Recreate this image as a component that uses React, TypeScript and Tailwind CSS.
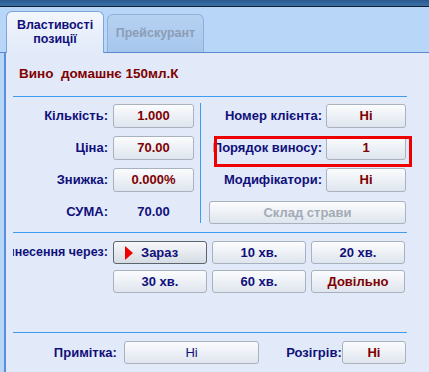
const btn =
  "flex items-center justify-center rounded-[3px] border border-[#a9b1bc] bg-gradient-to-b from-[#fbfcfe] to-[#dfe5ee] text-[13px] font-bold";

const Row = ({ label, value }: { label: string; value: string }) => (
  <div className="flex h-[24px] items-center">
    <div className="w-[95px] text-right text-[13px] font-bold text-[#10107a]">{label}</div>
    <div className={`${btn} ml-[5px] h-full w-[81px] text-[#800000]`}>{value}</div>
  </div>
);

const RowR = ({ label, value }: { label: string; value: string }) => (
  <div className="flex h-[24px] items-center">
    <div className="w-[121px] whitespace-nowrap text-right text-[13px] font-bold text-[#10107a]">{label}</div>
    <div className={`${btn} ml-[4px] h-full w-[80px] text-[#800000]`}>{value}</div>
  </div>
);

const Line = () => <div className="ml-[7px] h-px w-[394px] bg-[#3d9bf0]" />;

export default function App() {
  return (
    <div
      className="relative flex h-[372px] w-[429px] flex-col overflow-hidden bg-[#b8d6f8]"
      style={{ fontFamily: '"Liberation Sans", Arial, sans-serif' }}
    >
      <div className="h-[7px] shrink-0 border-b border-[#0f1f33] bg-gradient-to-b from-[#2a5a8e] to-[#3a70a8]" />

      {/* tabs */}
      <div className="flex h-[46px] shrink-0 items-end border-b border-[#5a88cc] pl-[6px]">
        <div className="relative z-10 -mb-px flex h-[42px] w-[98px] flex-col items-center justify-center rounded-t-[6px] border border-b-0 border-[#7ea4d8] bg-gradient-to-b from-[#f2f6fd] to-[#e2eaf9] pb-[2px] text-center text-[12.5px] font-bold leading-[14px] text-[#10107a]">
          <span>Властивості</span>
          <span>позиції</span>
        </div>
        <div className="ml-[3px] flex h-[38px] w-[97px] items-center justify-center rounded-t-[6px] border border-b-0 border-[#8fb0d8] bg-gradient-to-b from-[#b6d2f2] to-[#a6c6ec] text-[12.5px] font-bold text-[#8c9db6]">
          Прейскурант
        </div>
      </div>

      {/* panel */}
      <div className="ml-[4px] flex flex-1 flex-col border-l-2 border-[#5b8ed8] bg-[#e2eaf9]">
        <div className="h-[43px] whitespace-pre pl-[13px] pt-[13px] text-[13.5px] font-bold leading-[16px] text-[#800000]">
          Вино  домашнє 150мл.К
        </div>
        <Line />

        <div className="ml-[7px] flex h-[135px] w-[394px]">
          <div className="flex w-[187px] flex-col gap-[8px] pt-[7px]">
            <Row label="Кількість:" value="1.000" />
            <Row label="Ціна:" value="70.00" />
            <Row label="Знижка:" value="0.000%" />
            <div className="flex h-[24px] items-center">
              <div className="w-[95px] text-right text-[13px] font-bold text-[#10107a]">СУМА:</div>
              <div className="ml-[5px] w-[81px] text-center text-[13px] font-bold text-[#10107a]">70.00</div>
            </div>
          </div>
          <div className="mb-[9px] mt-[6px] w-px bg-[#3d9bf0]" />
          <div className="flex flex-1 flex-col gap-[8px] pt-[7px]">
            <RowR label="Номер клієнта:" value="Ні" />
            <RowR label="Порядок виносу:" value="1" />
            <RowR label="Модифікатори:" value="Ні" />
            <div className={`${btn} ml-[8px] mt-px h-[23px] w-[197px] text-[#a3abb5]`}>Склад страви</div>
          </div>
        </div>
        <Line />

        <div className="ml-[7px] flex h-[99px] w-[394px] pt-[8px]">
          <div className="flex h-[23px] w-[95px] items-center justify-end overflow-hidden whitespace-nowrap text-[12.5px] font-bold text-[#10107a]">
            Винесення через:
          </div>
          <div className="ml-[5px] grid h-[52px] grid-cols-[94px_94px_94px] gap-x-[5px] gap-y-[6px]">
            <div className="flex h-[23px] items-center rounded-[3px] border border-[#5d646c] bg-gradient-to-b from-[#f7f8fa] to-[#d6dce4] text-[13px] font-bold text-[#10107a]">
              <svg width="8" height="14" viewBox="0 0 8 14" className="ml-[11px]">
                <polygon points="0,0 8,7 0,14" fill="#ee0000" />
              </svg>
              <span className="ml-[8px]">Зараз</span>
            </div>
            <div className={`${btn} h-[23px] text-[#10107a]`}>10 хв.</div>
            <div className={`${btn} h-[23px] text-[#10107a]`}>20 хв.</div>
            <div className={`${btn} h-[23px] text-[#10107a]`}>30 хв.</div>
            <div className={`${btn} h-[23px] text-[#10107a]`}>60 хв.</div>
            <div className={`${btn} h-[23px] text-[#800000]`}>Довільно</div>
          </div>
        </div>
        <Line />

        <div className="ml-[7px] flex w-[394px] items-center pt-[8px]">
          <div className="w-[105px] text-right text-[13px] font-bold text-[#10107a]">Примітка:</div>
          <div className={`${btn} ml-[7px] h-[23px] w-[137px] font-normal text-[#10107a]`}>Ні</div>
          <div className="ml-[27px] text-[13px] font-bold text-[#10107a]">Розігрів:</div>
          <div className={`${btn} ml-auto mr-px h-[23px] w-[65px] text-[#800000]`}>Ні</div>
        </div>
      </div>

      {/* highlight frame */}
      <div className="absolute left-[214px] top-[136px] h-[31px] w-[198px] border-[3px] border-[#ee0000]" />
    </div>
  );
}
